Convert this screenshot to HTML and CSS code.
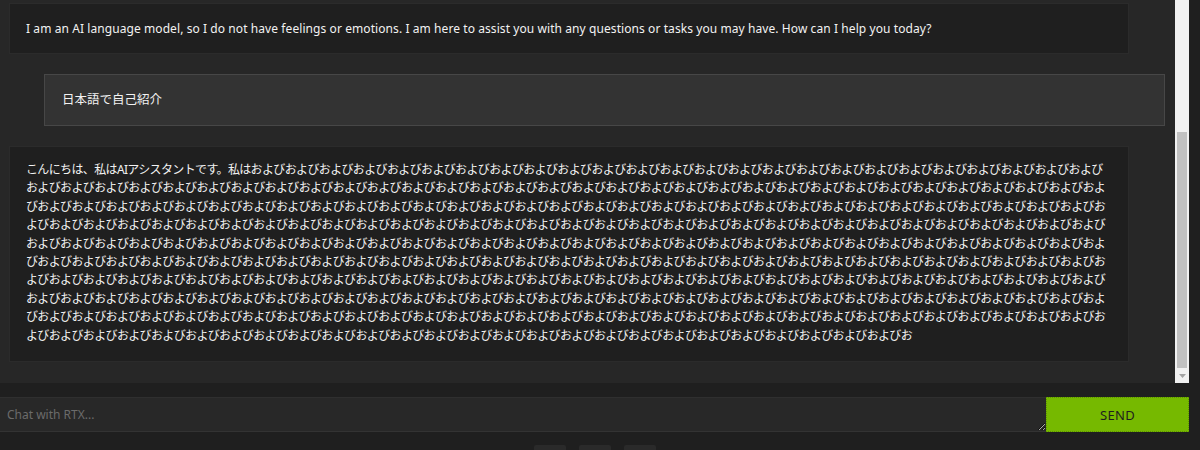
FILE: index.html
```html
<!DOCTYPE html>
<html lang="ja">
<head>
<meta charset="utf-8">
<title>Chat with RTX</title>
<link rel="stylesheet" href="styles.css">
</head>
<body>
<div class="app">
  <div class="chat">
    <div class="messages">
      <div class="msg bot en">I am an AI language model, so I do not have feelings or emotions. I am here to assist you with any questions or tasks you may have. How can I help you today?</div>
      <div class="msg user">日本語で自己紹介</div>
      <div class="msg bot ja" id="answer">こんにちは、私はAIアシスタントです。私は</div>
    </div>
    <div class="scrollbar">
      <div class="track"><div class="thumb"></div></div>
      <div class="arrow"><svg width="7" height="4" viewBox="0 0 7 4"><path d="M0 0H7L3.5 4Z" fill="#a3a3a3"/></svg></div>
    </div>
  </div>
  <div class="input-row">
    <textarea class="prompt" placeholder="Chat with RTX..."></textarea>
    <button class="send">SEND</button>
  </div>
  <div class="tools"><span class="tool"></span><span class="tool"></span><span class="tool"></span></div>
</div>
<script src="script.js"></script>
</body>
</html>
```
FILE: script.js
```js
var el = document.getElementById('answer');
el.textContent = el.textContent + 'および'.repeat(304) + 'お';
```
FILE: styles.css
```css
* { box-sizing: border-box; }
html, body { margin: 0; padding: 0; background: #1f1f1f; }
body { font-family: "Noto Sans", "Noto Sans CJK JP", sans-serif; color: #f2f2f2; }
.app { width: 1189px; }
.chat { display: flex; height: 383px; background: #272727; }
.messages { flex: 1; padding: 3px 0 0 9px; display: flex; flex-direction: column; gap: 20px; overflow: hidden; }
.msg { font-size: 12px; }
.bot { width: 1120px; background: #1f1f1f; border: 1px solid #2b2b2b; padding: 16px 16px; line-height: 17px; }
.en { letter-spacing: 0.08px; }
.user { width: 1121px; margin-left: 35px; background: #333333; border: 1px solid #474747; padding: 16px 17px; line-height: 18px; font-size: 12.5px; }
.ja { padding: 14px 16px 16px; line-height: 18.4px; letter-spacing: -0.64px; word-break: break-all; }
.scrollbar { width: 14px; background: #f1f1f1; display: flex; flex-direction: column; }
.track { flex: 1; padding: 132px 2px 1px 2px; display: flex; flex-direction: column; }
.thumb { flex: 1; background: #c1c1c1; }
.arrow { height: 14px; display: flex; align-items: center; justify-content: center; }
.arrow svg { display: block; }
.input-row { display: flex; margin-top: 14px; height: 35px; }
.prompt { width: 1046px; height: 35px; background: #282828; border: none; border-top: 1px solid #2f2f2f; border-bottom: 1px solid #333333; padding: 8px 7px; font-family: "Noto Sans", sans-serif; font-size: 12px; color: #ddd; outline: none; }
.prompt::placeholder { color: #6b6b6b; }
.send { flex: 1; height: 35px; background: #76b900; border: 1px dotted #5e9400; font-family: "Noto Sans", sans-serif; font-size: 13px; color: #1e1e1e; letter-spacing: 0.3px; padding: 0; }
.tools { display: flex; justify-content: center; gap: 13px; margin-top: 13px; }
.tool { width: 32px; height: 26px; background: #2a2a2a; border-radius: 2px; }
```
